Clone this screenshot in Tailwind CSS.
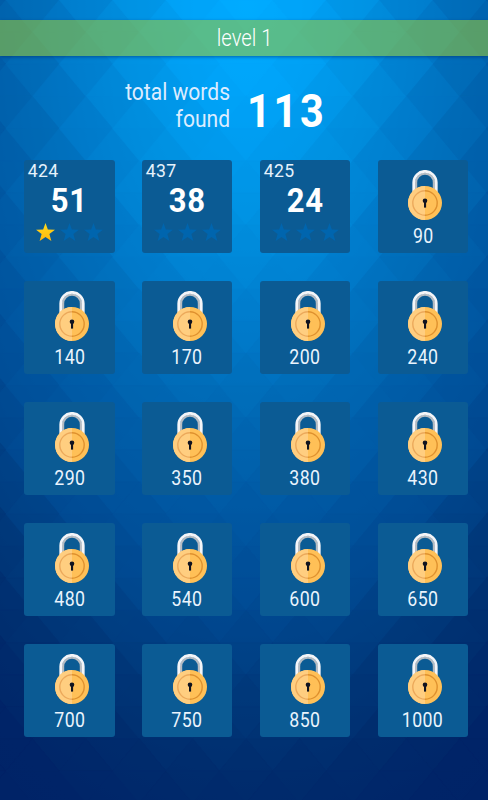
<!DOCTYPE html>
<html lang="en">
<head>
<meta charset="utf-8">
<title>Level 1</title>
<script src="https://cdn.jsdelivr.net/npm/@tailwindcss/browser@4"></script>
</head>
<body class="font-[Roboto,sans-serif] text-white">
<main class="relative isolate h-[800px] w-[488px] overflow-hidden bg-[#0060ad]">
  <svg id="facets" class="absolute inset-0 -z-10" width="488" height="800" aria-hidden="true"></svg>
  <header class="mt-5 flex h-9 items-center justify-center bg-[#a1ce2f]/55 shadow-[0_1px_3px_rgba(0,40,100,0.5)]">
    <h1 id="title" class="ml-[2px] scale-x-[.88] text-[23px] leading-none font-light">level 1</h1>
  </header>
  <section class="flex h-[104px] pt-[23px]">
    <p id="caption" class="w-[230px] origin-right scale-x-[.915] text-right text-[23px] leading-[27px] font-normal text-[#dcecff]">total words<br>found</p>
    <p id="total" class="ml-[16.5px] origin-left scale-x-[.9] pt-[9px] text-[46px] leading-[46px] font-bold tracking-[3px]">113</p>
  </section>
  <section id="grid" class="grid grid-cols-[repeat(4,90.3px)] auto-rows-[92.6px] gap-x-[27.5px] gap-y-[28.4px] pl-[24.3px]"></section>
</main>

<svg class="absolute top-0 left-0 h-0 w-0" aria-hidden="true">
  <defs>
    <linearGradient id="gold" x2="0" y2="1"><stop stop-color="#ffdc1e"/><stop offset="1" stop-color="#ffb60d"/></linearGradient>
    <symbol id="star" viewBox="0 0 20 19"><path d="M10 0 12.5 6.8 20 7 14.1 11.6 16.2 19 10 14.7 3.8 19 5.9 11.6 0 7 7.5 6.8Z"/></symbol>
    <symbol id="lock" viewBox="0 0 34 50">
      <path d="M8 24V12.6a9 9 0 0 1 18 0V24" fill="none" stroke="#b4bbc2" stroke-width="2.4"/>
      <path d="M5.7 24V12.6a11.3 11.3 0 0 1 22.6 0V24" fill="none" stroke="#f4f5f8" stroke-width="2.7"/>
      <circle cx="17" cy="33" r="17" fill="#ffc057"/>
      <path d="M17 16a17 17 0 0 0 0 34Z" fill="#ffce80"/>
      <path d="M17 20.8a12.2 12.2 0 0 0 0 24.4" fill="none" stroke="#eca95b" stroke-width="1.4"/>
      <path d="M17 20.8a12.2 12.2 0 0 1 0 24.4" fill="none" stroke="#df912f" stroke-width="1.4"/>
      <circle cx="17" cy="30.8" r="2.3" fill="#10131f"/>
      <path d="M16 31h2.1v6.6H16Z" fill="#10131f"/>
    </symbol>
  </defs>
</svg>

<script>
const stops = [[0,0,172,255],[100,0,164,249],[220,0,145,225],[330,0,122,202],[400,0,108,184],[500,0,90,165],[600,0,75,148],[700,0,56,122],[780,0,44,109],[860,0,36,104],[1000,0,34,102]];
function shade(x, y) {
  const d = Math.min(999, Math.hypot((x - 247) * 1.85, y));
  let i = 0;
  while (stops[i + 1][0] < d) i++;
  const a = stops[i], b = stops[i + 1], t = (d - a[0]) / (b[0] - a[0]);
  return 'rgb(' + [1, 2, 3].map(k => Math.round(a[k] + (b[k] - a[k]) * t)).join(',') + ')';
}
// Smooth light falloff, with triangular facets laid over it.
const W = 53.4, H = 32.13;
let facets = '<defs><radialGradient id="light" gradientUnits="userSpaceOnUse" cx="0" cy="0" r="1000" gradientTransform="translate(247 0) scale(.5405 1)">' +
  stops.map(([d, r, g, b]) => `<stop offset="${d / 1000}" stop-color="rgb(${r},${g},${b})"/>`).join('') +
  '</radialGradient></defs><rect width="488" height="800" fill="url(#light)"/><g opacity=".7">';
for (let r = 0; r < 25; r++) {
  const y0 = r * H, y1 = y0 + H;
  const top = r % 2 ? -20.9 : -47.6, bottom = r % 2 ? -47.6 : -20.9;
  const tri = (p, cx, cy) => {
    const c = shade(cx, cy);
    facets += `<polygon points="${p}" fill="${c}" stroke="${c}" stroke-width=".5"/>`;
  };
  for (let k = -1; k < 12; k++) {
    const a = top + k * W, b = bottom + k * W;
    tri(`${a},${y0} ${a + W},${y0} ${a + W / 2},${y1}`, a + W / 2, y0 + H * .2);
    tri(`${b},${y1} ${b + W},${y1} ${b + W / 2},${y0}`, b + W / 2, y1 - H * .2);
  }
}
document.getElementById('facets').innerHTML = facets + '</g>';

const played = [[424, 51, 1], [437, 38, 0], [425, 24, 0]];
const locked = [90, 140, 170, 200, 240, 290, 350, 380, 430, 480, 540, 600, 650, 700, 750, 850, 1000];
document.getElementById('grid').innerHTML =
  played.map(([id, words, stars]) => `
    <article class="flex flex-col rounded-[3px] bg-[#0b5b94]">
      <span class="origin-left scale-x-[.93] pt-px pl-[4px] text-[19px] leading-[20px] tracking-[.3px] text-[#e6f2fc]">${id}</span>
      <strong class="scale-x-[.94] text-center text-[33px] leading-[40px] font-bold tracking-[.6px]">${words}</strong>
      <div class="mt-[2px] flex justify-center gap-[5px]">
        ${[0, 1, 2].map(i => `<svg class="h-[18px] w-[19px]" fill="${i < stars ? 'url(#gold)' : '#0065ae'}"><use href="#star"/></svg>`).join('')}
      </div>
    </article>`).join('') +
  locked.map(n => `
    <article class="flex flex-col items-center rounded-[3px] bg-[#0b5b94]">
      <svg class="mt-[10px] ml-[5px] h-[50px] w-[34px]"><use href="#lock"/></svg>
      <span class="mt-[5px] scale-x-[.92] text-[19.3px] leading-[23px] tracking-[.4px] text-[#eaf4fd]">${n}</span>
    </article>`).join('');
</script>
</body>
</html>
